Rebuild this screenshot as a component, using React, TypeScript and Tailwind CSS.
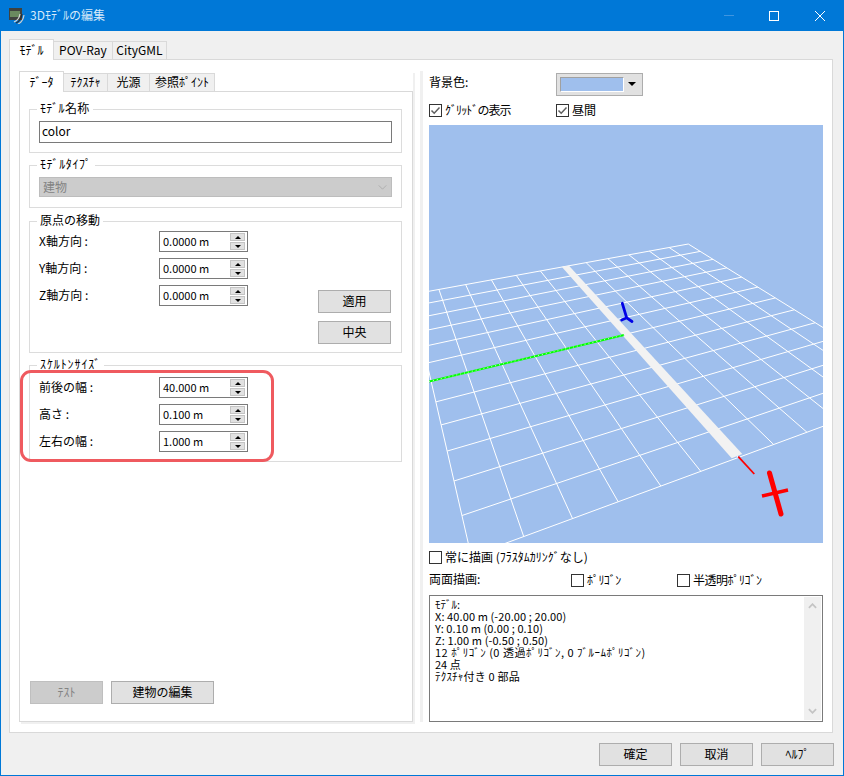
import React from "react";

function project(u: number, v: number) {
  const [x0, y0, x1, y1, x2, y2, x3, y3] = [411.2, 294.5, 688.3, 244, 923, 389.5, 471.2, 555.9];
  const dx1 = x1 - x2, dx2 = x3 - x2, sx = x0 - x1 + x2 - x3;
  const dy1 = y1 - y2, dy2 = y3 - y2, sy = y0 - y1 + y2 - y3;
  const den = dx1 * dy2 - dx2 * dy1;
  const g = (sx * dy2 - dx2 * sy) / den;
  const h = (dx1 * sy - sx * dy1) / den;
  const a = x1 - x0 + g * x1, b = x3 - x0 + h * x3;
  const d = y1 - y0 + g * y1, e = y3 - y0 + h * y3;
  const w = g * u + h * v + 1;
  return [(a * u + b * v + x0) / w, (d * u + e * v + y0) / w];
}

const idx = Array.from({ length: 13 }, (_, i) => i);

function Scene() {
  return (
    <svg viewBox="429 125 394 418" className="block w-[394px] h-[418px] bg-[#9fbfed]">
      {idx.map((i) => {
        const [ax, ay] = project(i / 12, 0);
        const [bx, by] = project(i / 12, 1);
        return <line key={"a" + i} x1={ax} y1={ay} x2={bx} y2={by} stroke="#fff" strokeWidth="1" />;
      })}
      {idx.map((i) => {
        const [ax, ay] = project(0, i / 12);
        const [bx, by] = project(1, i / 12);
        return <line key={"b" + i} x1={ax} y1={ay} x2={bx} y2={by} stroke="#fff" strokeWidth="1" />;
      })}
      <polygon points="561.7,266.7 569,265.7 742.3,454 731.7,458.3" fill="#f2f2f2" />
      <line x1="429" y1="381.5" x2="624" y2="335" stroke="#00ff00" strokeWidth="2" />
      <line x1="429" y1="381.5" x2="624" y2="335" stroke="#fff" strokeWidth="0.8" strokeDasharray="1 3" />
      <line x1="738.3" y1="456.7" x2="754.3" y2="474" stroke="#ff0000" strokeWidth="1.8" />
      <line x1="769.5" y1="473" x2="781" y2="514" stroke="#ff0000" strokeWidth="5" strokeLinecap="round" />
      <line x1="762" y1="496" x2="788" y2="490" stroke="#ff0000" strokeWidth="3.4" />
      <path d="M622.3 303.3 L626.7 317.8 M621.7 320 L626.7 317.8 L632 321.5" fill="none" stroke="#0000e6" strokeWidth="2.8" strokeLinecap="round" />
    </svg>
  );
}

function AppIcon() {
  return (
    <svg viewBox="0 0 16 16" className="w-4 h-4 shrink-0">
      <rect x="0" y="0" width="13" height="12" fill="#3f423f" />
      <rect x="1" y="3" width="10" height="6" fill="#6a8a5f" />
      <path d="M5 14 Q10 12 11 6" fill="none" stroke="#d8d8d8" strokeWidth="1.2" />
      <path d="M7 15 Q12 13 13 6" fill="none" stroke="#2e2e2e" strokeWidth="1.2" />
      <path d="M9 16 Q14 14 15 7" fill="none" stroke="#cfcfcf" strokeWidth="1.2" />
    </svg>
  );
}

function Group({ title, children, className = "", legendClass = "" }: { title: string; children: React.ReactNode; className?: string; legendClass?: string }) {
  return (
    <fieldset className={"border border-[#dcdcdc] px-[9px] " + className}>
      <legend className={"ml-[-2px] px-[3px] h-[14px] leading-[12px] " + legendClass}>{title}</legend>
      {children}
    </fieldset>
  );
}

function Spin({ label, value }: { label: string; value: string }) {
  return (
    <div className="flex items-center h-[21px]">
      <span className="w-[120px] pb-[2px]">{label}</span>
      <div className="w-[89px] h-[21px] border border-[#7a7a7a] bg-white flex items-center justify-between pl-[3px] pr-[2px]">
        <span className="text-[11px] pb-[2px]">{value}</span>
        <div className="flex flex-col gap-[1px]">
          <div className="w-[15px] h-[8px] bg-[#e1e1e1] border border-[#c4c4c4] flex items-center justify-center">
            <div className="w-0 h-0 border-x-[3px] border-x-transparent border-b-[3px] border-b-black" />
          </div>
          <div className="w-[15px] h-[8px] bg-[#e1e1e1] border border-[#c4c4c4] flex items-center justify-center">
            <div className="w-0 h-0 border-x-[3px] border-x-transparent border-t-[3px] border-t-black" />
          </div>
        </div>
      </div>
    </div>
  );
}

function Btn({ children, className = "w-[73px]", disabled = false }: { children: React.ReactNode; className?: string; disabled?: boolean }) {
  return (
    <div
      className={
        "h-[23px] flex items-center justify-center border pb-[2px] " +
        (disabled ? "bg-[#cccccc] border-[#bfbfbf] text-[#838383] " : "bg-[#e1e1e1] border-[#adadad] ") +
        className
      }
    >
      {children}
    </div>
  );
}

function Check({ label, checked = false, className = "", labelClass = "" }: { label: string; checked?: boolean; className?: string; labelClass?: string }) {
  return (
    <div className={"flex items-center h-[13px] " + className}>
      <div className="w-[13px] h-[13px] border border-[#333333] bg-white flex items-center justify-center">
        {checked && (
          <svg viewBox="0 0 11 11" className="w-[11px] h-[11px]">
            <path d="M1.5 5.5 L4.2 8.2 L9.5 2.5" fill="none" stroke="#5f5f5f" strokeWidth="1.5" />
          </svg>
        )}
      </div>
      <span className={"ml-[3px] whitespace-nowrap pb-[1px] " + labelClass}>{label}</span>
    </div>
  );
}

function OuterTab({ label, active = false, w }: { label: string; active?: boolean; w: string }) {
  return (
    <div
      className={
        "flex items-center justify-center border-t border-r border-[#d9d9d9] pb-[1px] " +
        w +
        (active ? " h-[21px] -mb-px bg-white border-l relative" : " h-[18px] bg-[#f0f0f0]")
      }
    >
      {label}
    </div>
  );
}

export default function App() {
  return (
    <div className="w-[844px] h-[776px] flex flex-col bg-[#0078d7] font-['Noto_Sans_CJK_JP','Noto_Sans',sans-serif] text-[12px] leading-[14px] text-black overflow-hidden">
      <div className="h-[31px] shrink-0 flex items-center pl-[9px] text-[#d6e9fa]">
        <AppIcon />
        <span className="ml-[5px] flex-1 pb-[2px]">3Dﾓﾃﾞﾙの編集</span>
        <div className="w-[10px] h-px bg-[#3f95e0] mr-[35px]" />
        <div className="w-[10px] h-[10px] border border-white mr-[36px]" />
        <svg viewBox="0 0 10 10" className="w-[10px] h-[10px] mr-[19px]">
          <path d="M0 0 L10 10 M10 0 L0 10" stroke="#fff" strokeWidth="1" />
        </svg>
      </div>
      <div className="flex-1 mx-px mb-px bg-[#f0f0f0] pt-[8px] pl-[8px] flex flex-col">
        <div className="flex items-end h-[20px]">
          <OuterTab label="ﾓﾃﾞﾙ" active w="w-[45px]" />
          <OuterTab label="POV-Ray" w="w-[59px]" />
          <OuterTab label="CityGML" w="w-[54px]" />
        </div>
        <div className="w-[824px] h-[674px] border border-[#d9d9d9] bg-white flex pt-[11px] pl-[9px]">
          <div className="w-[394px] h-[651px] flex flex-col shadow-[2px_2px_0_#f0f0f0]">
            <div className="flex items-end h-[20px]">
              <OuterTab label="ﾃﾞｰﾀ" active w="w-[45px]" />
              <OuterTab label="ﾃｸｽﾁｬ" w="w-[44px]" />
              <OuterTab label="光源" w="w-[42px]" />
              <OuterTab label="参照ﾎﾟｲﾝﾄ" w="w-[65px]" />
            </div>
            <div className="flex-1 border border-[#d9d9d9] bg-white pt-[10px] pl-[9px] pr-[10px] pb-[17px] flex flex-col">
              <Group title="ﾓﾃﾞﾙ名称" className="pt-[5px] pb-[9px]" legendClass="tracking-[0.3px]">
                <div className="h-[22px] border border-[#7a7a7a] flex items-center pl-[2px] pb-[2px]">color</div>
              </Group>
              <Group title="ﾓﾃﾞﾙﾀｲﾌﾟ" className="mt-[5px] pt-[5px] pb-[10px]" legendClass="tracking-[0.6px]">
                <div className="h-[20px] bg-[#cccccc] border border-[#bdbdbd] flex items-center justify-between pl-[3px] pr-[4px] text-[#838383]">
                  <span className="pb-[1px]">建物</span>
                  <svg viewBox="0 0 10 6" className="w-[9px] h-[5px]">
                    <path d="M0.5 0.5 L5 5 L9.5 0.5" fill="none" stroke="#a8a8a8" strokeWidth="1" />
                  </svg>
                </div>
              </Group>
              <Group title="原点の移動" className="mt-[6px] pt-[3px] pb-[8px] pr-[10px]">
                <div className="flex justify-between">
                  <div className="flex flex-col gap-[6px]">
                    <Spin label="X軸方向 :" value="0.0000 m" />
                    <Spin label="Y軸方向 :" value="0.0000 m" />
                    <Spin label="Z軸方向 :" value="0.0000 m" />
                  </div>
                  <div className="flex flex-col gap-[8px] pt-[59px]">
                    <Btn>適用</Btn>
                    <Btn>中央</Btn>
                  </div>
                </div>
              </Group>
              <div className="relative mt-[5px]">
                <Group title="ｽｹﾙﾄﾝｻｲｽﾞ" className="pt-[5px] pb-[9px]" legendClass="tracking-[0.9px]">
                  <div className="flex flex-col gap-[6px]">
                    <Spin label="前後の幅 :" value="40.000 m" />
                    <Spin label="高さ :" value="0.100 m" />
                    <Spin label="左右の幅 :" value="1.000 m" />
                  </div>
                </Group>
                <div className="absolute left-[-9px] top-[12px] w-[254px] h-[92px] rounded-[11px] border-[3.5px] border-[#ef5a5f]" />
              </div>
              <div className="mt-auto flex gap-[8px] pl-[1px]">
                <Btn disabled>ﾃｽﾄ</Btn>
                <Btn className="w-[103px]">建物の編集</Btn>
              </div>
            </div>
          </div>
          <div className="w-[3px] h-[651px] ml-[7px] bg-[#f0f0f0]" />
          <div className="w-[394px] ml-[6px] flex flex-col">
            <div className="flex items-center h-[24px] mt-[1px]">
              <span className="w-[127px] pb-[5px]">背景色:</span>
              <div className="w-[87px] h-[23px] bg-[#e1e1e1] border border-[#adadad] flex items-center pl-[3px]">
                <div className="w-[64px] h-[15px] bg-[#9fbfed] border-t border-l border-t-[#a0a0a0] border-l-[#a0a0a0] border-b border-r border-b-white border-r-white" />
                <div className="ml-[4px] w-0 h-0 border-x-[4px] border-x-transparent border-t-[4px] border-t-black" />
              </div>
            </div>
            <div className="flex mt-[8px]">
              <Check label="ｸﾞﾘｯﾄﾞの表示" checked className="w-[127px]" labelClass="tracking-[-0.9px]" />
              <Check label="昼間" checked />
            </div>
            <div className="mt-[8px]">
              <Scene />
            </div>
            <Check label="常に描画 (ﾌﾗｽﾀﾑｶﾘﾝｸﾞなし)" className="mt-[8px]" />
            <div className="flex items-center h-[13px] mt-[10px]">
              <span className="w-[142px] pb-[3px]">両面描画:</span>
              <Check label="ﾎﾟﾘｺﾞﾝ" className="w-[106px]" labelClass="tracking-[-0.6px]" />
              <Check label="半透明ﾎﾟﾘｺﾞﾝ" labelClass="tracking-[-0.5px]" />
            </div>
            <div className="mt-[8px] h-[127px] border border-[#7a7a7a] flex justify-between">
              <div className="pl-[5px] pt-[2px] text-[11px] leading-[12px] whitespace-pre">
                <div>ﾓﾃﾞﾙ:</div>
                <div className="tracking-[0.1px]">X: 40.00 m (-20.00 ; 20.00)</div>
                <div className="tracking-[0.1px]">Y: 0.10 m (0.00 ; 0.10)</div>
                <div className="tracking-[0.1px]">Z: 1.00 m (-0.50 ; 0.50)</div>
                <div className="tracking-[0.5px]">12 ﾎﾟﾘｺﾞﾝ (0 透過ﾎﾟﾘｺﾞﾝ, 0 ﾌﾞﾙｰﾑﾎﾟﾘｺﾞﾝ)</div>
                <div>24 点</div>
                <div className="tracking-[0.2px]">ﾃｸｽﾁｬ付き 0 部品</div>
              </div>
              <div className="w-[17px] mr-px my-px bg-[#f0f0f0] flex flex-col items-center justify-between py-[6px]">
                <svg viewBox="0 0 10 6" className="w-[9px] h-[6px]">
                  <path d="M1 5 L5 1 L9 5" fill="none" stroke="#c4c4c4" strokeWidth="2" />
                </svg>
                <svg viewBox="0 0 10 6" className="w-[9px] h-[6px]">
                  <path d="M1 1 L5 5 L9 1" fill="none" stroke="#c4c4c4" strokeWidth="2" />
                </svg>
              </div>
            </div>
          </div>
        </div>
        <div className="flex justify-end gap-[8px] mt-[10px] pr-[9px]">
          <Btn>確定</Btn>
          <Btn>取消</Btn>
          <Btn>ﾍﾙﾌﾟ</Btn>
        </div>
      </div>
    </div>
  );
}
